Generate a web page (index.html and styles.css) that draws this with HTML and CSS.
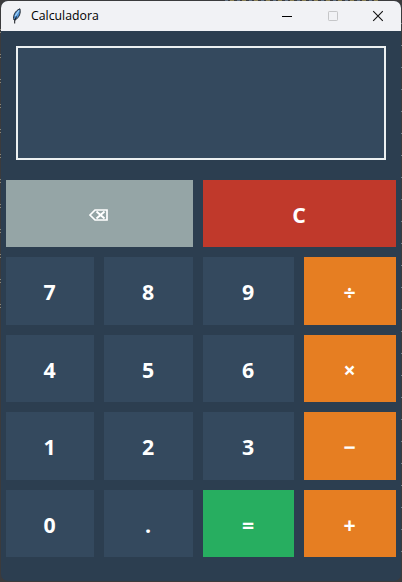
FILE: index.html
```html
<!DOCTYPE html>
<html lang="es">
<head>
<meta charset="utf-8">
<title>Calculadora</title>
<link rel="stylesheet" href="styles.css">
</head>
<body>
<main class="window">
  <header class="titlebar">
    <svg class="feather" viewBox="0 0 12 18" aria-hidden="true">
      <path d="M3 13C1.6 9 4 3.7 8.9 1.8c1 4-.4 8.4-4.6 11.2Z" fill="#4d91d5" stroke="#20252c" stroke-width="1"/>
      <path d="M8 3.5 4.2 9" stroke="#a8d4f5" stroke-width="1.3"/>
      <path d="M5.5 9.5 3.7 13.5V16.5" fill="none" stroke="#15191f" stroke-width="1"/>
    </svg>
    <h1 class="title">Calculadora</h1>
    <svg class="control" viewBox="0 0 12 12"><path d="M1 6.5h10" stroke="#000"/></svg>
    <svg class="control" viewBox="0 0 12 12"><rect x="1.5" y="1.5" width="9" height="9" rx=".7" fill="none" stroke="#c5c6c8"/></svg>
    <svg class="control" viewBox="0 0 12 12"><path d="m1.2 1.2 9.6 9.6m0-9.6-9.6 9.6" stroke="#111" stroke-width="1.1"/></svg>
  </header>
  <div class="display"></div>
  <section class="keys">
    <button class="key wide erase" aria-label="Borrar">
      <svg class="backspace" viewBox="0 0 19 12"><path d="M1 6 6 1h12v10H6Z" fill="none" stroke="#fff" stroke-width="1.7"/><path d="m7.5 2.5 8 7m0-7-8 7" stroke="#fff" stroke-width="2"/></svg>
    </button>
    <button class="key wide clear">C</button>
    <button class="key">7</button><button class="key">8</button><button class="key">9</button><button class="key operator">÷</button>
    <button class="key">4</button><button class="key">5</button><button class="key">6</button><button class="key operator">×</button>
    <button class="key">1</button><button class="key">2</button><button class="key">3</button><button class="key operator">−</button>
    <button class="key">0</button><button class="key">.</button><button class="key equals">=</button><button class="key operator">+</button>
  </section>
</main>
</body>
</html>
```
FILE: styles.css
```css
* { box-sizing: border-box; }
body {
  margin: 0;
  padding: 1px;
  height: 582px;
  overflow: hidden;
  background:
    repeating-linear-gradient(#0000 0 2px, #8a8577 2px 3px, #0000 3px 5px, #8a8577 5px 6px, #0000 6px 25px) 0 27px / 1px 290px no-repeat,
    repeating-linear-gradient(#0000 0 3px, #77828a 3px 4px, #0000 4px 22px) 401px 20px / 1px 540px no-repeat,
    repeating-linear-gradient(90deg, #5f6f80 0 3px, #3b3b3d 3px 5px, #8a7f55 5px 9px, #3b3b3d 9px 12px) 225px 0 / 155px 1px no-repeat,
    #3b3b3d;
  font-family: "Open Sans", "Noto Sans", sans-serif;
}
.window {
  width: 400px;
  height: 580px;
  border-radius: 7px;
  overflow: hidden;
  background: #2c3e50;
}
.titlebar {
  display: flex;
  align-items: center;
  height: 30px;
  padding-left: 10px;
  background: #f1f2f5;
}
.feather { width: 12px; height: 18px; margin-right: 8px; fill: none; }
.title {
  flex: 1;
  margin: 0;
  font: 400 12.3px/18px "Open Sans", "Noto Sans", sans-serif;
  color: #000;
}
.control { width: 12px; height: 12px; margin-left: 33.5px; }
.control:last-child { margin-right: 17px; }
.display {
  height: 114px;
  margin: 15px 15px 20px;
  border: 2px solid #ecf0f1;
  background: #34495e;
}
.keys {
  display: grid;
  grid-template-columns: 88px 89px 91px 92px;
  grid-template-rows: 67px 68px 67px 68px 67px;
  gap: 10px;
  padding: 0 5px;
}
.key {
  display: flex;
  align-items: center;
  justify-content: center;
  padding: 2px 1px 0 0;
  border: 0;
  background: #34495e;
  color: #fff;
  font: 700 21.3px/28px "Open Sans", "Noto Sans", sans-serif;
}
.wide { grid-column: span 2; }
.erase { padding-right: 2px; background: #95a5a6; }
.clear { background: #c0392b; }
.operator { background: #e67e22; }
.equals { background: #27ae60; }
.backspace { width: 19px; height: 12px; }
```
